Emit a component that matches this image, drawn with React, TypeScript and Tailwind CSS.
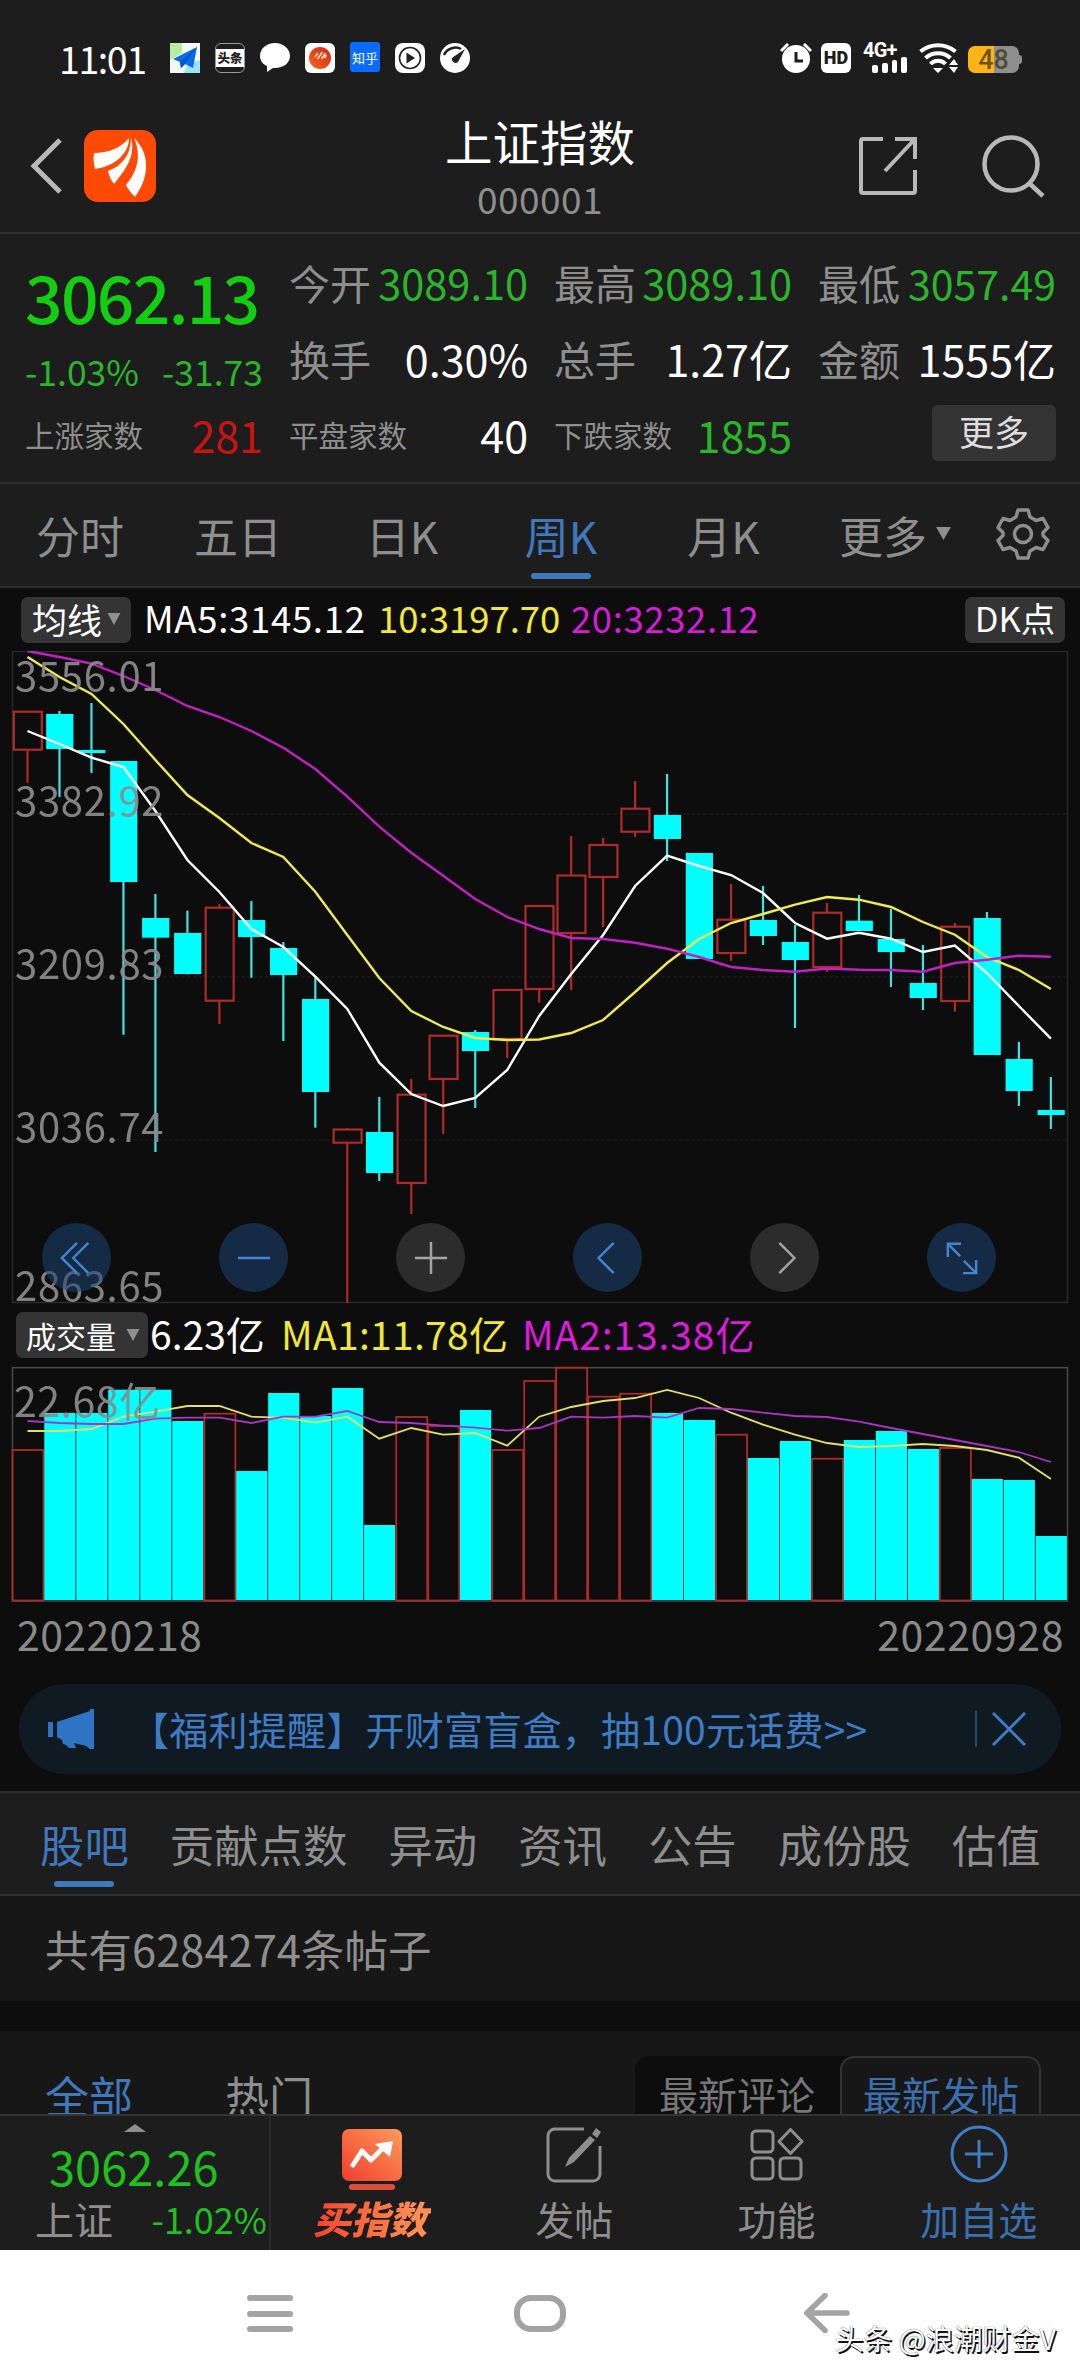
import type { ReactNode } from 'react';

type Candle = [up: number, high: number, top: number, bottom: number, low: number];

// weekly candles, y values are chart pixels
const CANDLES: Candle[] = [
  [1, 711, 711.7, 749.7, 782.7],
  [0, 711, 714, 749, 797],
  [0, 703, 750, 753, 773],
  [0, 761, 761, 882, 1034.7],
  [0, 894, 918, 937.7, 1152],
  [0, 910.7, 933, 974, 974.5],
  [1, 904, 907.7, 1000.7, 1024],
  [0, 901, 920, 937, 977.7],
  [0, 942, 948, 975, 1041],
  [0, 976, 999, 1092, 1127.7],
  [1, 1128, 1129.5, 1142.7, 1303],
  [0, 1097, 1132, 1173, 1181],
  [1, 1079, 1094.7, 1183, 1214],
  [1, 1035, 1035.7, 1079, 1134],
  [0, 1030, 1032, 1051, 1108],
  [1, 988.7, 990, 1039, 1058],
  [1, 905, 906, 989, 1002.7],
  [1, 836, 875.5, 933, 990],
  [1, 838, 845, 877, 927],
  [1, 781, 808.7, 831.7, 837],
  [0, 774, 815, 839, 861],
  [0, 853, 853, 959, 959],
  [1, 884, 919.7, 953, 961],
  [0, 886, 920, 936, 945],
  [0, 925, 942, 960, 1028],
  [1, 903, 912.7, 967, 972],
  [0, 895, 920.7, 931, 931],
  [0, 909, 939, 952, 987],
  [0, 945, 983, 998, 1010],
  [1, 923, 926.7, 1001, 1011.7],
  [0, 912, 918, 1055, 1055],
  [0, 1042, 1059, 1091, 1106],
  [0, 1077, 1110, 1115, 1129],
];

const MA5 = [731, 744, 757.7, 767, 811, 860, 892, 929, 947, 976.7, 1009, 1062.7, 1094, 1106, 1098, 1070, 1016, 974, 935, 886, 855.7, 866, 875, 893, 923, 938.7, 932.7, 938.7, 952, 945.5, 973, 1006, 1038.7];
const MA10 = [657, 677, 694, 724, 760, 795, 818, 843, 857, 891.7, 935, 978, 1011, 1027, 1038, 1040, 1039.5, 1033, 1020, 992, 963, 939, 923, 914, 904.7, 897, 899.7, 907, 922, 934.7, 957, 970, 989];
const MA20 = [651, 657, 663.7, 676, 690, 706, 717, 731, 747.7, 769, 796.7, 826.7, 852.7, 875.7, 899, 917, 929, 938, 939, 942.7, 948.7, 957, 967, 970, 971.7, 968.5, 969.7, 970, 971.7, 963, 959.7, 955.7, 956.7];

const VOLUME = [1450, 1413, 1413, 1389.7, 1389.7, 1421, 1413.7, 1471, 1393, 1416, 1388, 1525, 1417, 1426, 1410, 1450, 1381, 1367.7, 1396.7, 1393.7, 1413, 1420, 1434.7, 1458, 1441, 1458.7, 1440, 1431, 1449, 1448, 1479, 1480, 1536];
const VOLUME_UP = [0, 6, 12, 13, 15, 16, 17, 18, 19, 22, 25, 29];
const VMA1 = [1431, 1431, 1429, 1416.7, 1411.7, 1406, 1406, 1416.7, 1417.7, 1422.7, 1416.7, 1438.7, 1428, 1434.7, 1433, 1445.7, 1416.7, 1407, 1401, 1398, 1390, 1398, 1412.7, 1424.7, 1434.7, 1443, 1447, 1446, 1444, 1446, 1450, 1457.7, 1479];
const VMA2 = [1421, 1423, 1424, 1424, 1418.7, 1417.7, 1417.7, 1423, 1416.7, 1416.7, 1411, 1422, 1423, 1425.7, 1427.7, 1430.7, 1428, 1416.7, 1417.7, 1416, 1417.7, 1408, 1409, 1412.7, 1416, 1417, 1421.7, 1428, 1434, 1440, 1446, 1452, 1462];

const cx = (i: number) => 27.5 + i * 31.98;
const line = (ys: number[]) => ys.map((y, i) => `${cx(i).toFixed(1)},${y}`).join(' ');

function PriceChart() {
  const labels: [string, number][] = [
    ['3556.01', 691],
    ['3382.92', 816],
    ['3209.83', 979],
    ['3036.74', 1142],
    ['2863.65', 1301],
  ];
  return (
    <svg viewBox="0 651 1080 653" className="block h-[653px] w-full" fill="none">
      <rect x="12.5" y="651.5" width="1055" height="651" stroke="#2a2a2a" strokeWidth="1.5" />
      {[814, 977, 1140].map(y => (
        <path key={y} d={`M13 ${y}H1067`} stroke="#191919" strokeWidth="1.5" strokeDasharray="4 2" />
      ))}
      {CANDLES.map(([up, high, top, bottom, low], i) =>
        up ? (
          <g key={i} stroke="#b02a2a" strokeWidth="2.2">
            <path d={`M${cx(i)} ${high}V${top}M${cx(i)} ${bottom}V${low}`} />
            <rect x={cx(i) - 13.7} y={top} width="28" height={bottom - top} />
          </g>
        ) : (
          <g key={i}>
            <path d={`M${cx(i)} ${high}V${low}`} stroke="#3fe3e0" strokeWidth="2.2" />
            <rect x={cx(i) - 13.3} y={top} width="27.2" height={bottom - top} fill="#00ffff" />
          </g>
        ),
      )}
      <polyline points={line(MA5)} stroke="#ffffff" strokeWidth="2.4" />
      <polyline points={line(MA10)} stroke="#f0ec50" strokeWidth="2.4" />
      <polyline points={line(MA20)} stroke="#c320c3" strokeWidth="2.4" />
      {labels.map(([text, y]) => (
        <text key={text} x="15" y={y} fontSize="40" letterSpacing="0.7" fill="#8c8c8c" opacity="0.92">{text}</text>
      ))}
    </svg>
  );
}

function VolumeChart() {
  return (
    <svg viewBox="0 1366 1080 237" className="block h-[237px] w-full" fill="none">
      <rect x="12.5" y="1367.7" width="1055" height="233.3" stroke="#4a4a4a" strokeWidth="1.5" />
      {VOLUME.map((y, i) =>
        VOLUME_UP.includes(i) ? (
          <rect key={i} x={cx(i) - 15} y={y} width="31" height={1600.5 - y} stroke="#b02a2a" strokeWidth="1.8" />
        ) : (
          <rect key={i} x={cx(i) - 15.2} y={y} width="31.2" height={1600 - y} fill="#00ffff" />
        ),
      )}
      <polyline points={line(VMA1)} stroke="#e4df68" strokeWidth="1.8" />
      <polyline points={line(VMA2)} stroke="#a836c0" strokeWidth="1.8" />
      <text x="14" y="1417" fontSize="41" letterSpacing="0.5" fill="#8c8c8c" opacity="0.92">22.68亿</text>
    </svg>
  );
}

function RoundButton({ muted, children }: { muted?: boolean; children: ReactNode }) {
  return (
    <div className={`flex size-[69px] items-center justify-center rounded-full ${muted ? 'bg-[#2c2c2c] text-[#a5a5a5]' : 'bg-[#1d4674]/55 text-[#4585cf]'}`}>
      <svg viewBox="0 0 36 36" className="size-[34px]" fill="none" stroke="currentColor" strokeWidth="2.6">
        {children}
      </svg>
    </div>
  );
}

function StatusBar() {
  return (
    <div className="flex h-[116px] items-center pl-[59px] pr-[58px] text-white">
      <span className="w-[111px] text-[37.5px] leading-[38px] tracking-[-1.4px]">11:01</span>
      <div className="flex gap-[15px]">
        <svg viewBox="0 0 30 30" className="size-[30px]">
          <path d="M0 0h30v30H0z" fill="#f4f8f4" />
          <path d="M0 0h12v10L0 17z" fill="#b9eba4" />
          <path d="M14 30l4-9 12-4v13z" fill="#9be3fb" />
          <path d="M27 4L3 16l7 3 1 6 4-4 8 4z" fill="#0a6be8" />
          <path d="M27 4L10 19l1 6 4-4z" fill="#0856c4" />
        </svg>
        <div className="flex size-[30px] items-center justify-center rounded-[6px] border border-[#999]">
          <span className="flex h-[18px] w-[28px] items-center justify-center bg-white text-[12.5px] font-black leading-none text-[#222]">头条</span>
        </div>
        <svg viewBox="0 0 30 30" className="size-[30px]">
          <path d="M15 0C6.500 0 0 5.500 0 13c0 4.500 2.500 8 7 10v6l6-4h2c8.500 0 15-5 15-12S23.500 0 15 0z" fill="#fff" />
        </svg>
        <svg viewBox="0 0 30 30" className="size-[30px]">
          <defs>
            <linearGradient id="ball" x1="0" y1="1" x2="1" y2="0">
              <stop offset="0" stopColor="#f26a1c" />
              <stop offset="1" stopColor="#d9220f" />
            </linearGradient>
          </defs>
          <rect width="30" height="30" rx="6" fill="#fff" />
          <circle cx="15" cy="15" r="11" fill="url(#ball)" />
          <path d="M10 14l3-4M12.500 16l5-7M16.500 16l4-6M19.500 15l2-3" stroke="#ffe3cc" strokeWidth="1.600" />
        </svg>
        <div className="-mt-px flex size-[30px] items-center justify-center rounded-[3px] bg-[#0a6cff] text-[13px] leading-none">知乎</div>
        <svg viewBox="0 0 30 30" className="size-[30px]">
          <rect width="30" height="30" rx="8" fill="#fff" />
          <circle cx="15" cy="15" r="10.500" fill="none" stroke="#222" strokeWidth="1.600" />
          <path d="M11.500 9.500l8.500 5.500-8.500 5.500z" fill="#222" />
        </svg>
        <svg viewBox="0 0 30 30" className="size-[30px]">
          <circle cx="15" cy="15" r="15" fill="#fff" />
          <path d="M4 12c3-7 12-9 17-6" fill="none" stroke="#222" strokeWidth="2.500" />
          <path d="M25 6l-7 13a3.600 3.600 0 0 1-5.500-4.500z" fill="#222" />
        </svg>
      </div>
      <div className="ml-auto flex items-center">
        <svg viewBox="0 0 32 30" className="h-[30px] w-[32px]">
          <circle cx="16" cy="16" r="14" fill="#fff" />
          <path d="M1 8l7-7M31 8l-7-7" stroke="#fff" strokeWidth="3" />
          <path d="M16 9v9h7" fill="none" stroke="#1d1d1d" strokeWidth="3" />
        </svg>
        <span className="ml-[9px] flex size-[30px] items-center justify-center rounded-[6px] bg-white font-['Roboto'] text-[18px] font-black leading-none text-[#1d1d1d]">HD</span>
        <div className="ml-3 flex h-[30px] w-[44px] flex-col justify-between">
          <span className="h-[14px] whitespace-nowrap font-['Roboto'] text-[20px] font-bold leading-[14px] tracking-[-0.8px]">4G+</span>
          <div className="flex items-end gap-[4px] pl-[9px]">
            <i className="h-[8px] w-[6px] rounded-[2px] bg-white" />
            <i className="h-[10px] w-[6px] rounded-[2px] bg-white" />
            <i className="h-[13px] w-[6px] rounded-[2px] bg-white" />
            <i className="-mt-1 h-[16px] w-[6px] rounded-[2px] bg-white" />
          </div>
        </div>
        <svg viewBox="0 0 40 30" className="ml-3 h-[30px] w-[40px]" fill="none" stroke="#fff" strokeWidth="4">
          <path d="M1.500 8.500c10-8.500 25-8.500 35 0M6.500 15c7-6.500 18-6.500 25 0M11.500 21c4-4.500 11-4.500 15 0" />
          <path d="M14 25h10l-5 5zM30 22l5-6 4 6zM30 24h9l-4 6z" fill="#fff" stroke="none" />
        </svg>
        <div className="ml-[9px] mt-[3px] flex items-center">
          <div className="flex h-[27px] w-[51px] items-center justify-center rounded-[7px] bg-linear-to-r from-[#fdb515] from-50% to-[#8f8f8f] to-50% pt-px font-['Roboto'] text-[27px] font-medium leading-none text-[#3b3420]/75">48</div>
          <i className="h-[9px] w-[3px] rounded-r bg-[#8f8f8f]" />
        </div>
      </div>
    </div>
  );
}

function Header() {
  return (
    <div className="flex h-[118px] items-start border-b-2 border-[#2e2e2e]">
      <svg viewBox="0 0 32 56" className="ml-[30px] mt-[22px] h-[56px] w-[32px]" fill="none" stroke="#b8b8b8" strokeWidth="5">
        <path d="M30 2L4 28l26 26" />
      </svg>
      <svg viewBox="0 0 72 72" className="ml-[22px] mt-[14px] size-[72px]">
        <rect width="72" height="72" rx="14" fill="#ff4a05" />
        <path d="M10 23c14 0 27-5 35-15 0 15-13 28-34 31-1-5-2-10-1-16z" fill="#fff" />
        <path d="M47 8c5 19-6 32-17 46-3-4-5-8-6-13 14-5 23-16 23-33z" fill="#fff" />
        <path d="M50 8c15 14 17 37 1 59-4-4-7-8-9-12 11-13 16-29 8-47z" fill="#fff" />
      </svg>
      <div className="ml-[289px] flex w-[190px] flex-col items-center">
        <span className="text-[47.5px] leading-[50px] text-white">上证指数</span>
        <span className="mt-[9px] text-[37px] leading-[46px] tracking-[0.5px] text-[#8e8e8e]">000001</span>
      </div>
      <svg viewBox="0 0 58 58" className="ml-[224px] mt-[21px] size-[58px]" fill="none" stroke="#b8b8b8" strokeWidth="4">
        <path d="M24 2H4a2 2 0 0 0-2 2v50a2 2 0 0 0 2 2h50a2 2 0 0 0 2-2V33M36 2h20v20M55 3L26 34" />
      </svg>
      <svg viewBox="0 0 64 64" className="ml-[65px] mt-[18px] size-[64px]" fill="none" stroke="#b8b8b8" strokeWidth="4.500">
        <circle cx="29" cy="30" r="26.500" />
        <path d="M47 49l14 13" />
      </svg>
    </div>
  );
}

function Stat({ label, value, color = 'text-white', small, size = 'text-[43px]' }: { label: string; value: string; color?: string; small?: boolean; size?: string }) {
  return (
    <div className="flex h-[76px] items-center justify-between whitespace-nowrap leading-[76px]">
      <span className={`text-[#8e8e8e] ${small ? 'text-[29.5px]' : 'text-[41px]'}`}>{label}</span>
      <span className={`${size} ${color}`}>{value}</span>
    </div>
  );
}

function Quote() {
  return (
    <div className="flex h-[250px] gap-[26px] border-b-2 border-[#2e2e2e] pl-[25px] pt-[10px]">
      <div className="w-[238px]">
        <div className="pt-[11px] text-[66px] font-medium leading-[80px] tracking-[-1.7px] text-[#12cf12]">3062.13</div>
        <div className="flex h-[61px] justify-between text-[35.500px] leading-[71px] text-[#2bb52b]">
          <span>-1.03%</span>
          <span>-31.73</span>
        </div>
        <Stat label="上涨家数" value="281" color="text-[#c81414]" small />
      </div>
      <div className="w-[239px]">
        <Stat label="今开" value="3089.10" color="text-[#2bb52b]" size="text-[41.500px]" />
        <Stat label="换手" value="0.30%" />
        <Stat label="平盘家数" value="40" small />
      </div>
      <div className="w-[238px]">
        <Stat label="最高" value="3089.10" color="text-[#2bb52b]" size="text-[41.500px]" />
        <Stat label="总手" value="1.27亿" />
        <Stat label="下跌家数" value="1855" color="text-[#2bb52b]" small />
      </div>
      <div className="w-[238px]">
        <Stat label="最低" value="3057.49" color="text-[#2bb52b]" size="text-[41px]" />
        <Stat label="金额" value="1555亿" />
        <div className="mt-[9px] ml-auto flex h-[56px] w-[124px] items-center justify-center rounded-[6px] bg-[#343434] pb-[3px] text-[35px] text-[#dedede]">更多</div>
      </div>
    </div>
  );
}

function PeriodTabs() {
  return (
    <div className="flex h-[104px] border-b-2 border-[#2a2a2a] text-[44px] leading-[102px] text-[#8e8e8e]">
      <span className="w-[160px] text-center">分时</span>
      <span className="w-[156px] text-center">五日</span>
      <span className="w-[172px] text-center">日K</span>
      <span className="flex w-[146px] flex-col items-center text-[#3f78bd]">
        周K
        <i className="-mt-[13px] h-[6px] w-[60px] shrink-0 rounded-full bg-[#4079bb]" />
      </span>
      <span className="w-[179px] text-center">月K</span>
      <span className="ml-[26px] w-[97px]">更多</span>
      <svg viewBox="0 0 16 14" className="mt-[43px] h-[13px] w-[15px]" fill="#8e8e8e"><path d="M0 0h16L8 14z" /></svg>
      <svg viewBox="0 0 54 54" className="ml-[45px] mt-[23px] size-[54px]" fill="none" stroke="#8e8e8e" strokeWidth="3.500" strokeLinejoin="round">
        <path d="M22 3h10l2 7 6 3.500 7-2 5 9-5 5v3l5 5-5 9-7-2-6 3.500-2 7H22l-2-7-6-3.500-7 2-5-9 5-5v-3l-5-5 5-9 7 2 6-3.500z" />
        <circle cx="27" cy="27" r="8.500" />
      </svg>
    </div>
  );
}

function DownTriangle() {
  return <svg viewBox="0 0 14 13" className="h-[12px] w-[14px] shrink-0" fill="#909090"><path d="M0 0h14L7 13z" /></svg>;
}

function ChartArea() {
  return (
    <div className="bg-[#0d0d0d]">
      <div className="flex h-[63px] items-center whitespace-nowrap pl-[21px] pr-[15px] text-[36.5px]">
        <div className="flex h-[46px] w-[110px] items-center gap-[5px] rounded-[7px] bg-[#343434] pl-[11px] pb-[2px] text-[35px] leading-[43px] text-white">均线<DownTriangle /></div>
        <span className="ml-[13px] w-[234px] pb-[3px] tracking-[0.7px] text-white">MA5:3145.12</span>
        <span className="w-[193px] pb-[3px] text-[#f0e73a]">10:3197.70</span>
        <span className="pb-[3px] tracking-[0.6px] text-[#d61cd6]">20:3232.12</span>
        <span className="ml-auto flex h-[46px] w-[100px] items-center justify-center rounded-[7px] bg-[#343434] pb-[3px] text-[34.500px] text-white">DK点</span>
      </div>
      <div className="relative">
        <PriceChart />
        <div className="absolute bottom-[12px] left-[42px] flex gap-[108px]">
          <RoundButton><path d="M18 2L2 18l16 16M30 2L14 18l16 16" /></RoundButton>
          <RoundButton><path d="M1 18h34" /></RoundButton>
          <RoundButton muted><path d="M1 18h34M18 1v34" /></RoundButton>
          <RoundButton><path d="M24 2L8 18l16 16" /></RoundButton>
          <RoundButton muted><path d="M12 2l16 16-16 16" /></RoundButton>
          <RoundButton><path d="M3 17V3h14M3 3l13 13M33 20v14H19M33 34L20 21" /></RoundButton>
        </div>
      </div>
      <div className="flex h-[62px] items-center whitespace-nowrap pl-4 text-[39px] leading-[60px]">
        <div className="flex h-[46px] w-[132px] items-center gap-[10px] rounded-[7px] bg-[#343434] pl-[10px] text-[30px] text-white">成交量<DownTriangle /></div>
        <span className="ml-[2px] w-[131px] pb-[4px] text-white">6.23亿</span>
        <span className="w-[241px] pb-[4px] tracking-[0.3px] text-[#f0e73a]">MA1:11.78亿</span>
        <span className="pb-[4px] tracking-[0.9px] text-[#dd1add]">MA2:13.38亿</span>
      </div>
      <VolumeChart />
      <div className="flex h-[81px] justify-between pl-[17px] pr-[16px] text-[41px] leading-[61px] tracking-[0.4px] text-[#8a8a8a]">
        <span>20220218</span>
        <span className="tracking-[0.6px]">20220928</span>
      </div>
      <div className="mx-[19px] flex h-[90px] items-center rounded-full bg-[#101a22] text-[39px] text-[#3f7cc4]">
        <svg viewBox="0 0 46 40" className="ml-[29px] h-[40px] w-[46px]" fill="#2f74c4">
          <path d="M0 13h5v15H0zM9 13L42 2V0h4v40h-4l-4-3-12-3 2 5h-7l-3-3-3-1-1-4-5-3z" />
        </svg>
        <span className="ml-[36px] whitespace-nowrap pb-[2px] tracking-[0.25px]">【福利提醒】开财富盲盒，抽100元话费&gt;&gt;</span>
        <i className="ml-auto h-[36px] w-[2px] bg-[#24486f]" />
        <svg viewBox="0 0 34 34" className="ml-[15px] mr-[35px] size-[34px]" fill="none" stroke="#3f7cc4" strokeWidth="3"><path d="M1 1l32 32M33 1L1 33" /></svg>
      </div>
      <div className="h-[17px]" />
    </div>
  );
}

function InfoTabs() {
  return (
    <div className="flex h-[105px] gap-[41px] whitespace-nowrap border-y-2 border-[#2e2e2e] px-[40px] text-[44.400px] leading-[101px] text-[#8e8e8e]">
      <span className="flex flex-col items-center text-[#3f78bd]">
        股吧
        <i className="-mt-[13px] h-[6px] w-[60px] shrink-0 rounded-full bg-[#4079bb]" />
      </span>
      {['贡献点数', '异动', '资讯', '公告', '成份股', '估值'].map(t => (
        <span key={t}>{t}</span>
      ))}
    </div>
  );
}

function BottomBar() {
  return (
    <div className="flex h-[136px] border-t-2 border-[#333] text-[39px] text-[#8e8e8e]">
      <div className="flex w-[271px] flex-col border-r-2 border-[#2c2c2c]">
        <svg viewBox="0 0 22 8" className="ml-[124px] mt-[8px] h-[8px] w-[22px]" fill="#8e8e8e"><path d="M0 8L11 0l11 8z" /></svg>
        <span className="ml-[49px] mt-[4px] text-[47px] leading-[60px] text-[#1fc01f]">3062.26</span>
        <div className="flex justify-between pl-[35px] pr-[2px] leading-[44px]">
          <span>上证</span>
          <span className="text-[36px] text-[#1fc01f]">-1.02%</span>
        </div>
      </div>
      <div className="flex flex-1 flex-col items-center">
        <svg viewBox="0 0 60 62" className="mt-[13px] h-[62px] w-[60px]">
          <defs>
            <linearGradient id="buy" x1="0" y1="1" x2="1" y2="0">
              <stop offset="0" stopColor="#f03e2c" />
              <stop offset="1" stopColor="#ff9a5c" />
            </linearGradient>
          </defs>
          <rect width="60" height="52" rx="7" fill="url(#buy)" />
          <rect x="7" y="55" width="46" height="6" rx="3" fill="#d8503a" />
          <path d="M11 36l9-14 9 9 13-13" fill="none" stroke="#fff" strokeWidth="5" strokeLinejoin="round" strokeLinecap="round" />
          <path d="M33 15l18-3-3 16z" fill="#fff" />
        </svg>
        <span className="mt-[5px] bg-linear-to-r from-[#f4402e] to-[#ff9458] bg-clip-text pr-1 text-[38px] font-black italic leading-[44px] text-transparent">买指数</span>
      </div>
      <div className="flex flex-1 flex-col items-center">
        <svg viewBox="0 0 56 56" className="mt-[11px] size-[56px]" fill="none" stroke="#8e8e8e" strokeWidth="3">
          <path d="M38 2H9a7 7 0 0 0-7 7v38a7 7 0 0 0 7 7h38a7 7 0 0 0 7-7V19" />
          <path d="M50 1l5 4-4 6-5-4zM44 9l5 4-21 22-9 5 4-9z" fill="#8e8e8e" stroke="none" />
        </svg>
        <span className="mt-[13px] leading-[44px]">发帖</span>
      </div>
      <div className="flex flex-1 flex-col items-center">
        <svg viewBox="0 0 54 54" className="mt-[12px] size-[54px]" fill="none" stroke="#8e8e8e" strokeWidth="3">
          <rect x="2" y="3" width="21" height="21" rx="4" />
          <rect x="2" y="30" width="21" height="21" rx="4" />
          <rect x="30" y="30" width="21" height="21" rx="4" />
          <path d="M40.500 1.500L52 13.500 40.500 25.500 29 13.500z" strokeLinejoin="round" />
        </svg>
        <span className="mt-[14px] leading-[44px]">功能</span>
      </div>
      <div className="flex flex-1 flex-col items-center text-[#3b6fae]">
        <svg viewBox="0 0 58 58" className="mt-[9px] size-[58px]" fill="none" stroke="#3f7cc4" strokeWidth="3">
          <circle cx="29" cy="29" r="27" />
          <path d="M15 29h28M29 15v28" />
        </svg>
        <span className="mt-[13px] leading-[44px]">加自选</span>
      </div>
    </div>
  );
}

function SystemNav() {
  return (
    <div className="relative flex h-[126px] bg-white">
      <div className="ml-[247px] mt-[45px] flex h-[37px] w-[46px] flex-col justify-between">
        <i className="h-[6px] rounded-sm bg-[#a3a3a3]" />
        <i className="h-[6px] rounded-sm bg-[#a3a3a3]" />
        <i className="h-[6px] rounded-sm bg-[#a3a3a3]" />
      </div>
      <i className="ml-[221px] mt-[45px] h-[37px] w-[52px] rounded-[17px] border-[6px] border-[#a3a3a3]" />
      <svg viewBox="0 0 46 40" className="ml-[238px] mt-[43px] h-[40px] w-[46px]" fill="none" stroke="#a3a3a3" strokeWidth="5.500" strokeLinecap="round">
        <path d="M21 2.500L3 20l18 17.500M4 20h39" />
      </svg>
      <span className="absolute right-[24px] top-[68px] whitespace-nowrap text-[28.500px] leading-[40px] text-white [text-shadow:1.5px_1.5px_0_#111,0_0_1px_#111]">头条 @浪潮财金V</span>
    </div>
  );
}

export default function App() {
  return (
    <div className="h-[2376px] w-[1080px] overflow-hidden bg-[#1d1d1d] font-['Noto_Sans_CJK_SC',sans-serif]">
      <StatusBar />
      <Header />
      <Quote />
      <PeriodTabs />
      <ChartArea />
      <InfoTabs />
      <div className="h-[105px] bg-[#171717] pl-[45px] text-[43.500px] leading-[105px] text-[#8e8e8e]">共有6284274条帖子</div>
      <div className="h-[30px] bg-[#0d0d0d]" />
      <div className="flex h-[83px] items-start overflow-hidden bg-[#171717] pl-[45px] pr-[39px] text-[44px] text-[#8e8e8e]">
        <span className="mt-[32px] w-[180px] leading-[64px] text-[#3f78bd]">全部</span>
        <span className="mt-[32px] leading-[64px]">热门</span>
        <div className="ml-auto mt-[25px] flex h-[84px] w-[406px] rounded-[14px] bg-[#0d0d0d] text-[39px] leading-[74px]">
          <span className="w-[205px] pl-[24px] text-[#777]">最新评论</span>
          <span className="flex-1 rounded-[14px] border-2 border-[#333] bg-[#171717] pl-[21px] leading-[70px] text-[#3b6fae]">最新发帖</span>
        </div>
      </div>
      <BottomBar />
      <SystemNav />
    </div>
  );
}
